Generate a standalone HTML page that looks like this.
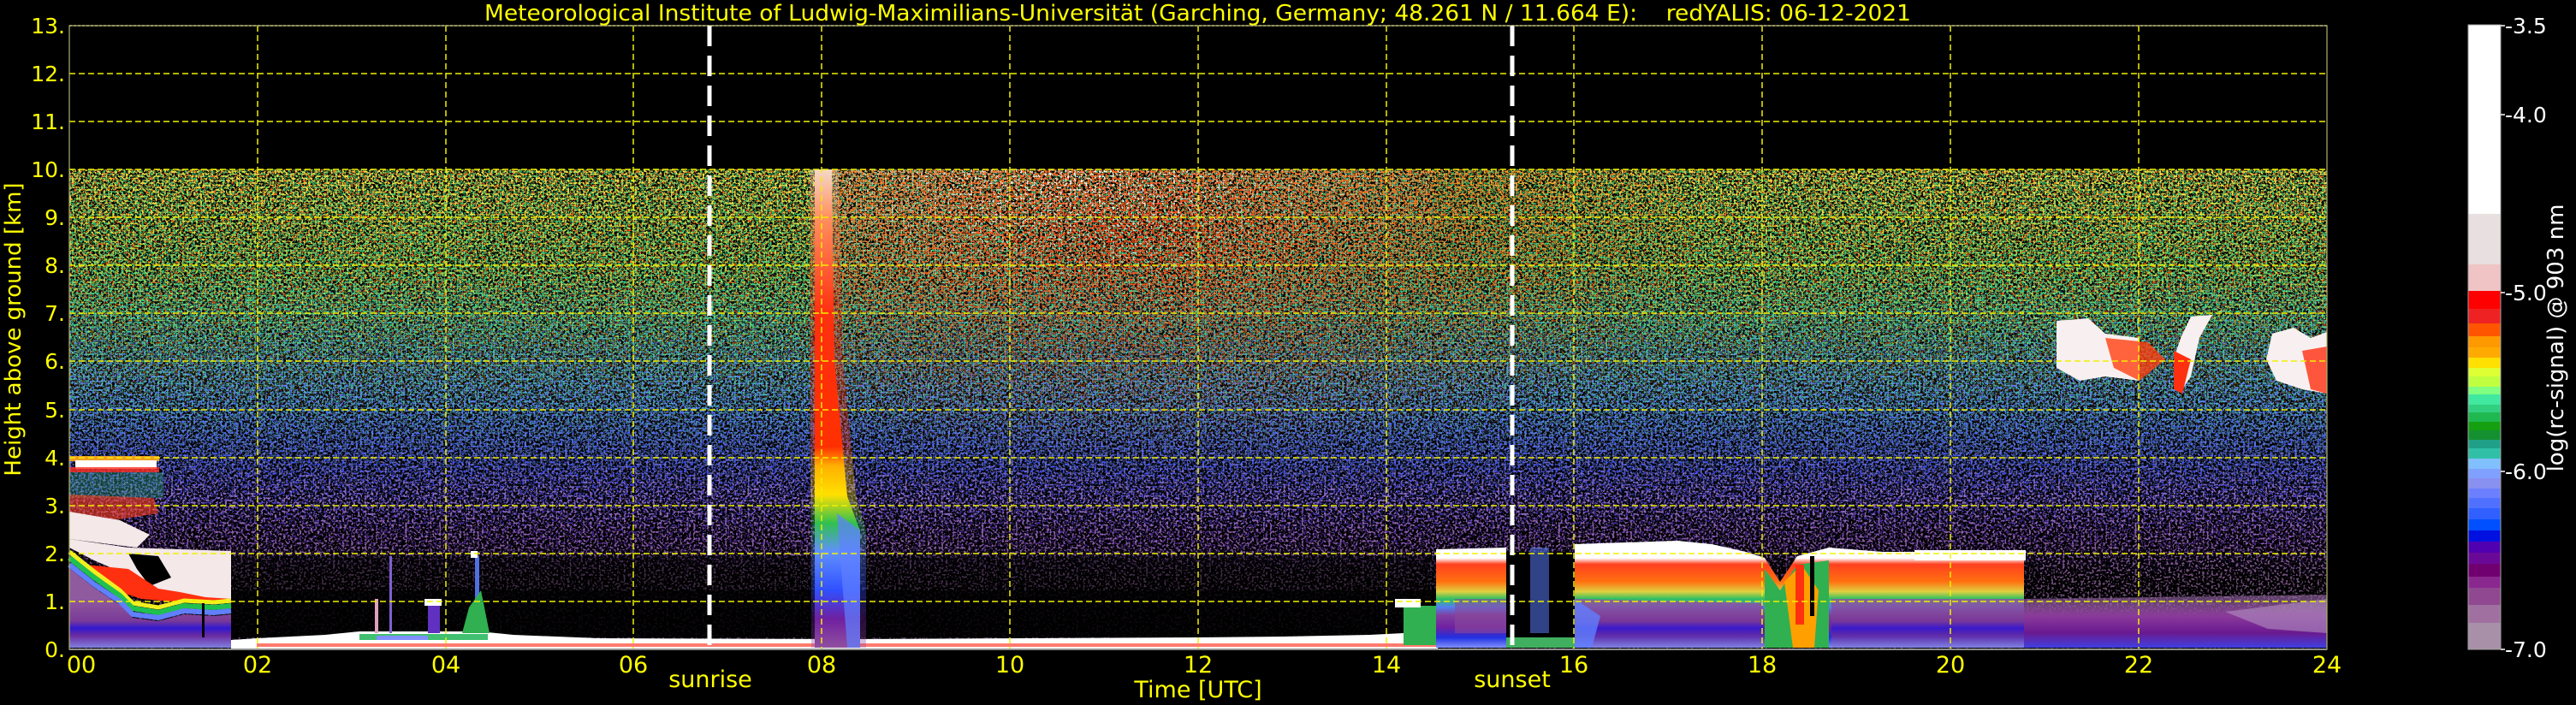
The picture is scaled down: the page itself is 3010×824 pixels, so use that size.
<!DOCTYPE html>
<html><head><meta charset="utf-8"><style>
html,body{margin:0;padding:0;background:#000;width:3010px;height:824px;overflow:hidden}
svg{display:block}
text{font-family:"DejaVu Sans","Liberation Sans",sans-serif}
</style></head><body>
<svg width="3010" height="824" viewBox="0 0 3010 824" xmlns="http://www.w3.org/2000/svg">
<defs>
<clipPath id="pc"><rect x="81" y="198" width="2638" height="561"/></clipPath>
<filter id="nA" filterUnits="userSpaceOnUse" x="81" y="198" width="2638" height="561"><feTurbulence type="fractalNoise" baseFrequency="0.38" numOctaves="2" seed="3"/><feColorMatrix type="matrix" values="0 0 0 0 0 0 0 0 0 0 0 0 0 0 0 16 0 0 0 -8.7" result="m"/><feComposite in="SourceGraphic" in2="m" operator="in"/></filter>
<filter id="nB" filterUnits="userSpaceOnUse" x="81" y="198" width="2638" height="561"><feTurbulence type="fractalNoise" baseFrequency="0.38" numOctaves="2" seed="11"/><feColorMatrix type="matrix" values="0 0 0 0 0 0 0 0 0 0 0 0 0 0 0 16 0 0 0 -8.7" result="m"/><feComposite in="SourceGraphic" in2="m" operator="in"/></filter>
<filter id="nC" filterUnits="userSpaceOnUse" x="81" y="198" width="2638" height="561"><feTurbulence type="fractalNoise" baseFrequency="0.38" numOctaves="2" seed="27"/><feColorMatrix type="matrix" values="0 0 0 0 0 0 0 0 0 0 0 0 0 0 0 16 0 0 0 -8.7" result="m"/><feComposite in="SourceGraphic" in2="m" operator="in"/></filter>
<filter id="nD" filterUnits="userSpaceOnUse" x="81" y="198" width="2638" height="561"><feTurbulence type="fractalNoise" baseFrequency="0.38" numOctaves="2" seed="45"/><feColorMatrix type="matrix" values="0 0 0 0 0 0 0 0 0 0 0 0 0 0 0 16 0 0 0 -8.7" result="m"/><feComposite in="SourceGraphic" in2="m" operator="in"/></filter>
<filter id="nE" filterUnits="userSpaceOnUse" x="81" y="198" width="2638" height="561"><feTurbulence type="fractalNoise" baseFrequency="0.38" numOctaves="2" seed="77"/><feColorMatrix type="matrix" values="0 0 0 0 0 0 0 0 0 0 0 0 0 0 0 16 0 0 0 -8.9" result="m"/><feComposite in="SourceGraphic" in2="m" operator="in"/></filter>
<linearGradient id="gW" x1="0" y1="0" x2="0" y2="1"><stop offset="0" stop-color="#ff7020" stop-opacity="1"/><stop offset="0.25" stop-color="#ff5010" stop-opacity="0.85"/><stop offset="0.45" stop-color="#ff6000" stop-opacity="0.3"/><stop offset="0.6" stop-color="#ff6000" stop-opacity="0"/></linearGradient>
<linearGradient id="gY" x1="0" y1="0" x2="0" y2="1"><stop offset="0" stop-color="#ffe040" stop-opacity="1"/><stop offset="0.3" stop-color="#e0ff40" stop-opacity="0.6"/><stop offset="0.5" stop-color="#e0ff40" stop-opacity="0"/></linearGradient>
<linearGradient id="gG" x1="0" y1="0" x2="0" y2="1"><stop offset="0" stop-color="#40e080" stop-opacity="0.7"/><stop offset="0.3" stop-color="#30d090" stop-opacity="1"/><stop offset="0.5" stop-color="#50c0d0" stop-opacity="0.8"/><stop offset="0.65" stop-color="#6090ff" stop-opacity="0.3"/><stop offset="0.75" stop-color="#6090ff" stop-opacity="0"/></linearGradient>
<linearGradient id="gB" x1="0" y1="0" x2="0" y2="1"><stop offset="0.2" stop-color="#5070ff" stop-opacity="0"/><stop offset="0.45" stop-color="#6080ff" stop-opacity="0.9"/><stop offset="0.62" stop-color="#4050f0" stop-opacity="1"/><stop offset="0.78" stop-color="#6030c0" stop-opacity="0.6"/><stop offset="0.85" stop-color="#6030c0" stop-opacity="0"/></linearGradient>
<linearGradient id="gP" x1="0" y1="0" x2="0" y2="1"><stop offset="0.5" stop-color="#9060b0" stop-opacity="0"/><stop offset="0.68" stop-color="#9868b8" stop-opacity="1"/><stop offset="0.85" stop-color="#a070b0" stop-opacity="0.7"/><stop offset="1" stop-color="#a070b0" stop-opacity="0.5"/></linearGradient>
<radialGradient id="rWh" cx="0.4" cy="0" r="0.8"><stop offset="0" stop-color="#ffffff" stop-opacity="1"/><stop offset="1" stop-color="#ffffff" stop-opacity="0"/></radialGradient>
<radialGradient id="rRd" cx="0.35" cy="0.2" r="0.7"><stop offset="0" stop-color="#ff3010" stop-opacity="1"/><stop offset="1" stop-color="#ff3010" stop-opacity="0"/></radialGradient>
<linearGradient id="plume" x1="0" y1="198" x2="0" y2="757" gradientUnits="userSpaceOnUse"><stop offset="0" stop-color="#f4d8c8"/><stop offset="0.1" stop-color="#ff9060"/><stop offset="0.3" stop-color="#ff3010"/><stop offset="0.58" stop-color="#ff3000"/><stop offset="0.62" stop-color="#ffb000"/><stop offset="0.68" stop-color="#ffe000"/><stop offset="0.74" stop-color="#30c050"/><stop offset="0.8" stop-color="#6090ff"/><stop offset="0.88" stop-color="#3050ff"/><stop offset="0.94" stop-color="#7020a0"/><stop offset="1" stop-color="#9050a0"/></linearGradient>
<linearGradient id="layer" x1="0" y1="638" x2="0" y2="757" gradientUnits="userSpaceOnUse"><stop offset="0" stop-color="#ffffff"/><stop offset="0.12" stop-color="#ffffff"/><stop offset="0.18" stop-color="#ff4020"/><stop offset="0.35" stop-color="#ff7010"/><stop offset="0.45" stop-color="#e0d040"/><stop offset="0.52" stop-color="#30c060"/><stop offset="0.6" stop-color="#5080f0"/><stop offset="0.68" stop-color="#8040a0"/><stop offset="0.8" stop-color="#7020a0"/><stop offset="0.9" stop-color="#2030e0"/><stop offset="1" stop-color="#8090ff"/></linearGradient>
<linearGradient id="purp" x1="0" y1="700" x2="0" y2="757" gradientUnits="userSpaceOnUse"><stop offset="0" stop-color="#905a9e"/><stop offset="0.45" stop-color="#7a3a98"/><stop offset="0.6" stop-color="#3018d0"/><stop offset="0.75" stop-color="#6a2aa0"/><stop offset="1" stop-color="#8080e0"/></linearGradient>
<linearGradient id="purpR" x1="0" y1="700" x2="0" y2="757" gradientUnits="userSpaceOnUse"><stop offset="0" stop-color="#9a6aa8" stop-opacity="0.6"/><stop offset="0.35" stop-color="#8a3a9a"/><stop offset="0.7" stop-color="#6a1a90"/><stop offset="1" stop-color="#4040e0"/></linearGradient>
</defs>

<!-- noise field -->
<g clip-path="url(#pc)">
<rect x="81" y="198" width="2638" height="561" fill="url(#gW)" filter="url(#nA)"/>
<rect x="81" y="198" width="2638" height="561" fill="url(#gG)" filter="url(#nB)"/>
<rect x="81" y="198" width="2638" height="561" fill="url(#gY)" filter="url(#nC)"/>
<rect x="81" y="198" width="2638" height="561" fill="url(#gB)" filter="url(#nD)"/>
<rect x="81" y="198" width="2638" height="561" fill="url(#gP)" filter="url(#nE)"/>
<rect x="81" y="198" width="2638" height="561" fill="url(#gG)" filter="url(#nE)" opacity="0.6"/>
<rect x="975" y="198" width="700" height="260" fill="url(#rWh)" filter="url(#nE)"/>
<rect x="975" y="198" width="1000" height="380" fill="url(#rRd)" filter="url(#nC)"/>
</g>
<!-- darken low-level clear air -->
<rect x="270" y="690" width="1410" height="55" fill="#000" opacity="0.85"/>
<rect x="270" y="650" width="1410" height="40" fill="#000" opacity="0.45"/>
<rect x="1680" y="655" width="700" height="40" fill="#000" opacity="0.3"/>

<!-- left boundary-layer structure -->
<rect x="81" y="533" width="105" height="6" fill="#f0a020"/>
<rect x="88" y="538" width="95" height="10" fill="#fff"/>
<rect x="81" y="546" width="105" height="6" fill="#ff3020" opacity="0.8"/>
<rect x="81" y="552" width="110" height="30" fill="#30a080" opacity="0.4"/>
<polygon points="81,578 180,582 185,600 120,610 81,598" fill="#ff4020" opacity="0.6"/>
<polygon points="81,598 140,608 175,625 160,640 81,630" fill="#f4e8e8"/>
<polygon points="81,630 150,640 270,644 270,703 230,700 200,693 170,690 140,668 110,655 81,640" fill="#f4e8e8"/>
<polygon points="150,647 185,650 200,675 175,685 160,665" fill="#000"/>
<polygon points="100,660 150,665 185,688 210,692 240,698 270,700 270,705 230,705 200,703 165,700 135,690 110,678" fill="#ff3010"/>
<polyline points="81,645 110,668 140,690 155,705 185,710 215,702 250,704 270,702" fill="none" stroke="#f0f020" stroke-width="5"/>
<polyline points="81,652 110,675 140,696 155,711 185,716 215,708 250,710 270,708" fill="none" stroke="#20c050" stroke-width="6"/>
<polyline points="81,660 110,683 140,703 155,718 185,722 215,714 250,716 270,714" fill="none" stroke="#6080ff" stroke-width="6"/>
<polygon points="81,664 110,687 140,707 155,722 185,726 215,718 250,720 270,718 270,757 81,757" fill="url(#purp)"/>
<rect x="236" y="705" width="3" height="40" fill="#000"/>

<!-- ground layer 01.7h - 14.5h -->
<polygon points="270,748 300,746 340,744 380,742 420,738 560,738 600,742 700,746 1000,747 1400,745 1500,744 1600,742 1640,740 1680,744 1680,758 270,758" fill="#fff"/>
<rect x="300" y="752" width="1380" height="4" fill="#ff4030" opacity="0.7"/>
<rect x="420" y="741" width="150" height="7" fill="#40c070"/>
<rect x="440" y="743" width="60" height="5" fill="#8090ff"/>
<rect x="455" y="650" width="3" height="90" fill="#8060d0"/>
<rect x="438" y="700" width="4" height="40" fill="#e0a0c0"/>
<rect x="500" y="700" width="14" height="40" fill="#6030c0"/>
<rect x="496" y="700" width="20" height="8" fill="#fff"/>
<rect x="555" y="650" width="5" height="90" fill="#5070e0"/>
<polygon points="540,740 548,710 562,690 572,740" fill="#30b050"/>
<rect x="550" y="644" width="8" height="8" fill="#fff"/>
<rect x="1640" y="708" width="50" height="46" fill="#30b050"/>
<rect x="1630" y="700" width="30" height="10" fill="#fff"/>

<!-- 08h plume -->
<polygon points="946,198 980,198 985,420 1000,580 1012,620 1012,757 948,757" fill="url(#plume)" opacity="0.35"/>
<polygon points="952,198 972,198 975,420 990,580 1005,620 1005,757 952,757" fill="url(#plume)"/>
<polygon points="978,600 1005,620 1005,757 990,757" fill="#6080ff" opacity="0.7"/>

<!-- evening layer 14.5h-21h -->
<polygon points="1678,642 1760,640 1760,757 1678,757" fill="url(#layer)"/>
<rect x="1700" y="700" width="60" height="40" fill="#8a4a9a" opacity="0.6"/>
<rect x="1760" y="645" width="80" height="100" fill="#000"/>
<rect x="1788" y="640" width="22" height="100" fill="#5070e0" opacity="0.6"/>
<rect x="1760" y="745" width="80" height="12" fill="#40b060"/>
<polygon points="1840,636 1900,634 1960,632 2000,636 2040,645 2062,652 2080,680 2100,650 2137,640 2200,645 2260,645 2300,647 2365,648 2365,757 1840,757" fill="url(#layer)"/>
<polygon points="1840,700 2060,705 2062,757 1840,757" fill="url(#purp)" opacity="0.85"/>
<polygon points="2140,700 2365,700 2365,757 2140,757" fill="url(#purp)" opacity="0.85"/>
<polygon points="1840,700 1870,720 1860,757 1840,757" fill="#6080ff" opacity="0.8"/>
<polygon points="2062,665 2080,690 2100,660 2137,655 2137,757 2062,757" fill="#30b050"/>
<polygon points="2085,680 2105,660 2125,690 2120,757 2095,757" fill="#ffa000"/>
<rect x="2098" y="660" width="10" height="70" fill="#ff3010"/>
<rect x="2115" y="650" width="5" height="70" fill="#000"/>
<rect x="2237" y="643" width="130" height="12" fill="#fff"/>
<polygon points="2365,700 2719,695 2719,757 2365,757" fill="url(#purpR)"/>
<polygon points="2600,715 2719,700 2719,740 2650,735" fill="#b090c0" opacity="0.6"/>

<!-- high cloud 22h-24h -->
<polygon points="2403,375 2440,372 2460,390 2500,395 2500,445 2460,440 2430,445 2403,430" fill="#f8f0f0"/>
<polygon points="2460,395 2510,400 2530,420 2500,445 2470,430" fill="#ff4010" opacity="0.8"/>
<polygon points="2560,370 2585,368 2570,395 2560,440 2550,455 2540,420 2548,395" fill="#f8f0f0"/>
<polygon points="2540,410 2560,420 2550,460 2540,455" fill="#ff3010"/>
<polygon points="2655,390 2680,383 2700,395 2719,388 2719,460 2690,455 2660,445 2648,420" fill="#f8f0f0"/>
<polygon points="2690,410 2719,405 2719,460 2700,455" fill="#ff3010" opacity="0.8"/>

<!-- grid -->
<g stroke="#f0f000" stroke-width="1.5" stroke-dasharray="7,4" fill="none">
<line x1="81" y1="703" x2="2719" y2="703"/><line x1="81" y1="647" x2="2719" y2="647"/><line x1="81" y1="591" x2="2719" y2="591"/><line x1="81" y1="535" x2="2719" y2="535"/><line x1="81" y1="479" x2="2719" y2="479"/><line x1="81" y1="422" x2="2719" y2="422"/><line x1="81" y1="366" x2="2719" y2="366"/><line x1="81" y1="310" x2="2719" y2="310"/><line x1="81" y1="254" x2="2719" y2="254"/><line x1="81" y1="198" x2="2719" y2="198"/><line x1="81" y1="142" x2="2719" y2="142"/><line x1="81" y1="86" x2="2719" y2="86"/>
<line x1="301" y1="30" x2="301" y2="759"/><line x1="521" y1="30" x2="521" y2="759"/><line x1="740" y1="30" x2="740" y2="759"/><line x1="960" y1="30" x2="960" y2="759"/><line x1="1180" y1="30" x2="1180" y2="759"/><line x1="1400" y1="30" x2="1400" y2="759"/><line x1="1620" y1="30" x2="1620" y2="759"/><line x1="1839" y1="30" x2="1839" y2="759"/><line x1="2059" y1="30" x2="2059" y2="759"/><line x1="2279" y1="30" x2="2279" y2="759"/><line x1="2499" y1="30" x2="2499" y2="759"/>
</g>
<line x1="81" y1="30" x2="2719" y2="30" stroke="#d0d0a0" stroke-width="1.5" stroke-dasharray="3,2"/>
<rect x="81" y="30" width="2638" height="729" fill="none" stroke="#b0b070" stroke-width="1.2"/>
<line x1="81" y1="759" x2="2719" y2="759" stroke="#909090" stroke-width="2"/>

<!-- sunrise / sunset -->
<g stroke="#fff" stroke-width="5" stroke-dasharray="24,11">
<line x1="829" y1="30" x2="829" y2="759"/><line x1="1767" y1="30" x2="1767" y2="759"/>
</g>

<!-- title -->
<text x="566" y="24" font-size="26" fill="#ffff00" textLength="1667" lengthAdjust="spacingAndGlyphs" xml:space="preserve">Meteorological Institute of Ludwig-Maximilians-Universität (Garching, Germany; 48.261 N / 11.664 E):    redYALIS: 06-12-2021</text>

<!-- y tick labels -->
<g font-size="25" fill="#ffff00" text-anchor="end">
<text x="76" y="768">0.</text><text x="76" y="712">1.</text><text x="76" y="656">2.</text><text x="76" y="600">3.</text><text x="76" y="544">4.</text><text x="76" y="488">5.</text><text x="76" y="431">6.</text><text x="76" y="375">7.</text><text x="76" y="319">8.</text><text x="76" y="263">9.</text><text x="76" y="207">10.</text><text x="76" y="151">11.</text><text x="76" y="95">12.</text><text x="76" y="39">13.</text>
</g>
<text transform="translate(24,385) rotate(-90)" font-size="26" fill="#ffff00" text-anchor="middle">Height above ground [km]</text>

<!-- x tick labels -->
<g font-size="27" fill="#ffff00" text-anchor="middle">
<text x="95" y="786">00</text><text x="301" y="786">02</text><text x="521" y="786">04</text><text x="740" y="786">06</text><text x="960" y="786">08</text><text x="1180" y="786">10</text><text x="1400" y="786">12</text><text x="1620" y="786">14</text><text x="1839" y="786">16</text><text x="2059" y="786">18</text><text x="2279" y="786">20</text><text x="2499" y="786">22</text><text x="2719" y="786">24</text>
</g>
<g font-size="27" fill="#ffff00" text-anchor="middle">
<text x="1400" y="815">Time [UTC]</text>
<text x="830" y="803">sunrise</text>
<text x="1767" y="803">sunset</text>
</g>

<!-- colorbar -->
<g>
<rect x="2884" y="29" width="38" height="221" fill="#ffffff"/>
<rect x="2884" y="250" width="38" height="60" fill="#e8e0e0"/>
<rect x="2884" y="309" width="38" height="31" fill="#f0c4c4"/>
<rect x="2884" y="340" width="38" height="21" fill="#ff0000"/>
<rect x="2884" y="361" width="38" height="17" fill="#ee2222"/>
<rect x="2884" y="378" width="38" height="15" fill="#ff5500"/>
<rect x="2884" y="393" width="38" height="13" fill="#ff9900"/>
<rect x="2884" y="406" width="38" height="12" fill="#ffaa00"/>
<rect x="2884" y="418" width="38" height="12" fill="#ffe000"/>
<rect x="2884" y="430" width="38" height="10" fill="#ddff33"/>
<rect x="2884" y="440" width="38" height="12" fill="#c0ff40"/>
<rect x="2884" y="452" width="38" height="9" fill="#80ff80"/>
<rect x="2884" y="461" width="38" height="12" fill="#40e8a0"/>
<rect x="2884" y="473" width="38" height="9" fill="#30d080"/>
<rect x="2884" y="482" width="38" height="11" fill="#20b850"/>
<rect x="2884" y="493" width="38" height="10" fill="#14a010"/>
<rect x="2884" y="503" width="38" height="11" fill="#149030"/>
<rect x="2884" y="514" width="38" height="10" fill="#20a088"/>
<rect x="2884" y="524" width="38" height="12" fill="#30c0a8"/>
<rect x="2884" y="536" width="38" height="12" fill="#80c0ff"/>
<rect x="2884" y="548" width="38" height="11" fill="#80a0ff"/>
<rect x="2884" y="559" width="38" height="12" fill="#8890f0"/>
<rect x="2884" y="571" width="38" height="11" fill="#6c80ff"/>
<rect x="2884" y="582" width="38" height="12" fill="#5070ff"/>
<rect x="2884" y="594" width="38" height="13" fill="#3060ff"/>
<rect x="2884" y="607" width="38" height="13" fill="#0050ff"/>
<rect x="2884" y="620" width="38" height="13" fill="#0010e0"/>
<rect x="2884" y="633" width="38" height="13" fill="#5000b0"/>
<rect x="2884" y="646" width="38" height="13" fill="#6a0898"/>
<rect x="2884" y="659" width="38" height="15" fill="#700070"/>
<rect x="2884" y="674" width="38" height="13" fill="#8a2890"/>
<rect x="2884" y="687" width="38" height="20" fill="#904890"/>
<rect x="2884" y="707" width="38" height="21" fill="#a070a0"/>
<rect x="2884" y="728" width="38" height="31" fill="#a890a8"/>
<rect x="2884" y="29" width="38" height="730" fill="none" stroke="#a0a0a0" stroke-width="1"/>
</g>
<g stroke="#fff" stroke-width="1.5"><line x1="2922" y1="30" x2="2927" y2="30"/><line x1="2922" y1="134" x2="2927" y2="134"/><line x1="2922" y1="342" x2="2927" y2="342"/><line x1="2922" y1="551" x2="2927" y2="551"/><line x1="2922" y1="759" x2="2927" y2="759"/></g>
<g font-size="25" fill="#ffffff">
<text x="2927" y="39">-3.5</text><text x="2927" y="143">-4.0</text><text x="2927" y="351">-5.0</text><text x="2927" y="560">-6.0</text><text x="2927" y="768">-7.0</text>
</g>
<text transform="translate(2995,395) rotate(-90)" font-size="26" fill="#ffffff" text-anchor="middle">log(rc-signal) @ 903 nm</text>
</svg>
</body></html>
